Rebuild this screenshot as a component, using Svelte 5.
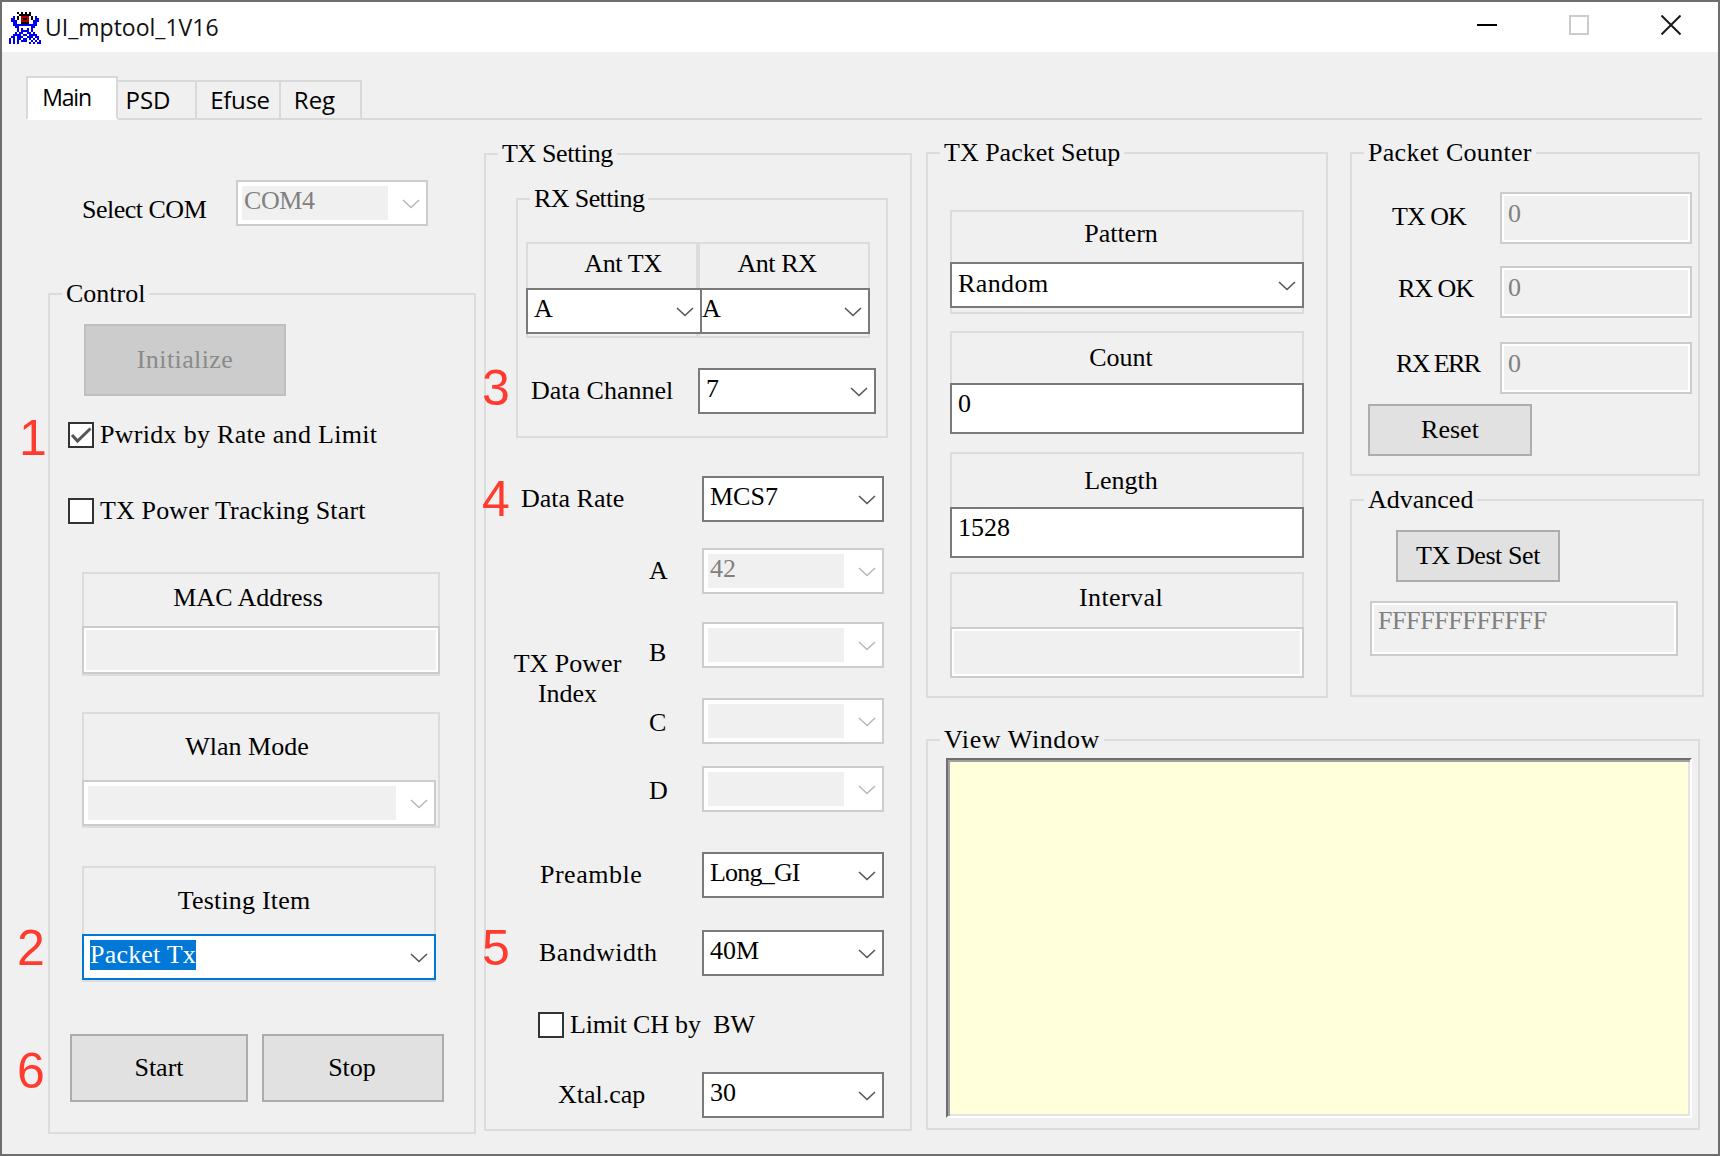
<script>
  const iconRows = [
    "....k.k.k.k.....",
    ".....kkkkkk.....",
    "..b.kwrrrrwk.b..",
    ".bb.kwrkkrwk.bb.",
    ".bbb.wrrrrw.bbb.",
    "..bb..kkkk..bb..",
    "..bbbbbbbbbbbb..",
    "...bbwwwwwwbb...",
    "....bwbwwbwb....",
    "....bwbbbbwb....",
    "...b.bbwwbb.b...",
    "..bbbbwbbwbbbb..",
    ".bbwbbbwwbbbwbb.",
    "bwbwbb.bb.bwbwb.",
    "bwbwb.bbb..bwbwb",
    "b.b.b.....b.b.bb"
  ];
  const iconColors = { b: "#0000f0", k: "#000000", r: "#b00000", w: "#ffffff" };

  const marks = [
    { n: 1, x: 19, y: 413 },
    { n: 2, x: 17, y: 923 },
    { n: 6, x: 17, y: 1046 },
    { n: 3, x: 482, y: 363 },
    { n: 4, x: 482, y: 474 },
    { n: 5, x: 482, y: 923 }
  ];

  const powerRows = [
    { id: "a", value: "42" },
    { id: "b", value: "" },
    { id: "c", value: "" },
    { id: "d", value: "" }
  ];

  const counters = [
    { id: "c-tx", label: "TX OK" },
    { id: "c-rx", label: "RX OK" },
    { id: "c-err", label: "RX ERR" }
  ];
</script>

{#snippet combo(value, cls = "")}
  <div class="combo {cls}">
    <span class="value">{value}</span>
    <svg class="chevron" width="18" height="10" viewBox="0 0 18 10">
      <path d="M1 1 L9 8.5 L17 1" fill="none" stroke-width="1.6" />
    </svg>
  </div>
{/snippet}

{#snippet checkbox(text, checked = false, cls = "")}
  <div class="check {cls}">
    <span class="box">
      {#if checked}
        <svg width="22" height="22" viewBox="0 0 22 22">
          <path d="M2 11 L7.5 17 L20.5 4.5" fill="none" stroke="#555" stroke-width="3" />
        </svg>
      {/if}
    </span>
    <span>{text}</span>
  </div>
{/snippet}

<div class="window">
  <header class="titlebar">
    <svg class="app-icon" width="32" height="32" viewBox="0 0 16 16" shape-rendering="crispEdges">
      {#each iconRows as row, y}
        {#each row.split("") as px, x}
          {#if iconColors[px]}
            <rect {x} {y} width="1" height="1" fill={iconColors[px]} />
          {/if}
        {/each}
      {/each}
    </svg>
    <span class="title">UI_mptool_1V16</span>
    <div class="caption">
      <span class="cap-btn"><i class="min"></i></span>
      <span class="cap-btn"><i class="max"></i></span>
      <span class="cap-btn">
        <svg width="20" height="20" viewBox="0 0 20 20">
          <path d="M0.5 0.5 L19.5 19.5 M19.5 0.5 L0.5 19.5" stroke="#1a1a1a" stroke-width="2" fill="none" />
        </svg>
      </span>
    </div>
  </header>

  <nav class="tabs">
    <span class="tab active">Main</span>
    <span class="tab psd">PSD</span>
    <span class="tab efuse">Efuse</span>
    <span class="tab reg">Reg</span>
  </nav>

  <main class="page">
    <section class="col-left">
      <div class="com-row">
        <span class="com-label">Select COM</span>
        {@render combo("COM4", "off com")}
      </div>

      <fieldset class="control">
        <legend>Control</legend>
        <button class="btn disabled init" type="button">Initialize</button>
        {@render checkbox("Pwridx by Rate and Limit", true, "pwr")}
        {@render checkbox("TX Power Tracking Start", false, "track")}

        <div class="group mac">
          <div class="group-title t-mac">MAC Address</div>
          <div class="edit off mac-edit"></div>
        </div>

        <div class="group wlan">
          <div class="group-title t-wlan">Wlan Mode</div>
          {@render combo("", "off wide")}
        </div>

        <div class="group testing">
          <div class="group-title t-test">Testing Item</div>
          <div class="combo focus wide">
            <span class="value"><span class="selected">Packet Tx</span></span>
            <svg class="chevron" width="18" height="10" viewBox="0 0 18 10">
              <path d="M1 1 L9 8.5 L17 1" fill="none" stroke-width="1.6" />
            </svg>
          </div>
        </div>

        <div class="run-row">
          <button class="btn start" type="button">Start</button>
          <button class="btn stop" type="button">Stop</button>
        </div>
      </fieldset>
    </section>

    <fieldset class="tx">
      <legend>TX Setting</legend>

      <fieldset class="rx">
        <legend>RX Setting</legend>
        <div class="ant">
          <div class="ant-cell first">
            <div class="ant-title">Ant TX</div>
            {@render combo("A", "ant-tx")}
          </div>
          <div class="ant-cell second">
            <div class="ant-title">Ant RX</div>
            {@render combo("A", "ant-rx")}
          </div>
        </div>
        <div class="channel">
          <span>Data Channel</span>
          {@render combo("7", "ch")}
        </div>
      </fieldset>

      <div class="row rate"><span>Data Rate</span>{@render combo("MCS7", "std")}</div>

      <div class="power">
        <div class="power-label">TX Power<br />Index</div>
        <div class="power-rows">
          {#each powerRows as r}
            <div class="power-row {r.id}">
              <span class="letter">{r.id.toUpperCase()}</span>
              {@render combo(r.value, "off std")}
            </div>
          {/each}
        </div>
      </div>

      <div class="row preamble"><span>Preamble</span>{@render combo("Long_GI", "std")}</div>
      <div class="row bandwidth"><span>Bandwidth</span>{@render combo("40M", "std")}</div>
      {@render checkbox("Limit CH by\u00a0 BW", false, "limit")}
      <div class="row xtal"><span>Xtal.cap</span>{@render combo("30", "std")}</div>
    </fieldset>

    <section class="col-right">
      <div class="top-row">
        <fieldset class="setup">
          <legend>TX Packet Setup</legend>
          <div class="group pattern">
            <div class="group-title t-pattern">Pattern</div>
            {@render combo("Random", "wide")}
          </div>
          <div class="group count">
            <div class="group-title">Count</div>
            <div class="edit">0</div>
          </div>
          <div class="group length">
            <div class="group-title">Length</div>
            <div class="edit">1528</div>
          </div>
          <div class="group interval">
            <div class="group-title">Interval</div>
            <div class="edit off"></div>
          </div>
        </fieldset>

        <div class="stack">
          <fieldset class="counter">
            <legend>Packet Counter</legend>
            {#each counters as c}
              <div class="count-row {c.id}">
                <span class="count-label">{c.label}</span>
                <div class="edit off small">0</div>
              </div>
            {/each}
            <button class="btn reset" type="button">Reset</button>
          </fieldset>

          <fieldset class="advanced">
            <legend>Advanced</legend>
            <button class="btn dest" type="button">TX Dest Set</button>
            <div class="edit off dest-edit">FFFFFFFFFFFF</div>
          </fieldset>
        </div>
      </div>

      <fieldset class="view">
        <legend>View Window</legend>
        <div class="log"></div>
      </fieldset>
    </section>
  </main>

  {#each marks as m}
    <span class="mark" style="left:{m.x - 2}px;top:{m.y - 2}px">{m.n}</span>
  {/each}
</div>

<style>
  :global(body) {
    margin: 0;
    background: #f0f0f0;
  }

  .window {
    position: relative;
    box-sizing: border-box;
    width: 1720px;
    height: 1156px;
    border: 2px solid #6e6e6e;
    background: #f0f0f0;
    color: #000;
    font-family: "Liberation Serif", serif;
    font-size: 26px;
    overflow: hidden;
  }

  .titlebar {
    display: flex;
    align-items: center;
    height: 50px;
    background: #fff;
    font-family: "Open Sans", sans-serif;
  }

  .app-icon {
    margin-left: 7px;
    margin-top: 2px;
  }

  .title {
    margin-left: 4px;
    font-size: 23px;
    color: #111;
  }

  .caption {
    display: flex;
    margin-left: auto;
    margin-right: 1px;
    padding-bottom: 4px;
  }

  .cap-btn {
    display: flex;
    align-items: center;
    justify-content: center;
    width: 92px;
    height: 20px;
  }

  .min {
    display: block;
    width: 20px;
    height: 2px;
    background: #000;
  }

  .max {
    display: block;
    box-sizing: border-box;
    width: 20px;
    height: 20px;
    border: 2px solid #ccc;
  }

  .tabs {
    display: flex;
    align-items: flex-end;
    height: 42px;
    margin: 24px 16px 0 24px;
    border-bottom: 2px solid #d9d9d9;
    font-family: "Open Sans", sans-serif;
    font-size: 24px;
  }

  .tab {
    box-sizing: border-box;
    height: 40px;
    margin-bottom: -2px;
    border: 2px solid #d9d9d9;
    border-left-width: 0;
    line-height: 36px;
    text-align: center;
  }

  .tab.active {
    width: 92px;
    height: 44px;
    border-left-width: 2px;
    border-bottom-color: #fff;
    background: #fff;
    line-height: 38px;
    padding-right: 11px;
    font-size: 23px;
    letter-spacing: -1.2px;
  }

  .tab.psd {
    width: 79px;
    padding-right: 17px;
  }

  .tab.efuse {
    width: 84px;
    padding-left: 4px;
    letter-spacing: -0.3px;
  }

  .tab.reg {
    width: 81px;
    padding-right: 12px;
  }

  .page {
    display: flex;
    align-items: flex-start;
    padding-left: 46px;
  }

  fieldset {
    box-sizing: border-box;
    min-width: 0;
    margin: 0;
    padding: 0;
    border: 2px solid #dcdcdc;
  }

  legend {
    margin-left: 12px;
    padding: 0 4px;
    line-height: 30px;
    white-space: nowrap;
  }

  .tx > legend {
    letter-spacing: -0.4px;
  }

  .rx > legend {
    letter-spacing: -0.6px;
  }

  .view > legend {
    letter-spacing: 0.6px;
  }

  .counter > legend {
    letter-spacing: 0.3px;
  }

  .btn {
    display: block;
    box-sizing: border-box;
    padding: 0;
    border: 2px solid #adadad;
    border-radius: 0;
    background: #e1e1e1;
    color: #000;
    font: inherit;
  }

  .btn.disabled {
    border-color: #bfbfbf;
    background: #ccc;
    color: #8a8a8a;
    letter-spacing: 0.4px;
  }

  .combo {
    display: flex;
    align-items: center;
    box-sizing: border-box;
    height: 46px;
    border: 2px solid #7a7a7a;
    background: #fff;
    flex: none;
    position: relative;
  }

  .value {
    flex: 1;
    align-self: stretch;
    display: block;
    min-width: 0;
    padding: 0 0 0 6px;
    line-height: 38px;
    white-space: nowrap;
  }

  .chevron {
    flex: none;
    margin: 2px 6px 0 14px;
    stroke: #555;
  }

  .combo.off {
    border-color: #ccc;
  }

  .combo.off .value {
    margin: 4px 0 4px 4px;
    padding-left: 2px;
    background: #f0f0f0;
    color: #808080;
    line-height: 30px;
  }

  .combo.off .chevron {
    stroke: #b9b9b9;
  }

  .combo.focus {
    border-color: #0078d7;
  }

  .selected {
    display: inline-block;
    margin-top: 4px;
    height: 30px;
    line-height: 30px;
    background: #0078d7;
    color: #fff;
    letter-spacing: 0.2px;
  }

  .combo.wide {
    width: auto;
    margin: 0 -2px;
  }

  .combo.com {
    width: 192px;
    margin-left: 0;
  }

  .combo.com .value {
    letter-spacing: -0.4px;
  }

  .combo.std {
    width: 182px;
  }

  .combo.ch {
    width: 178px;
  }

  .combo.ant-tx {
    width: 176px;
    margin-left: -2px;
  }

  .combo.ant-rx {
    width: 170px;
  }

  .combo.ant-rx .value {
    padding-left: 0;
  }

  .edit {
    box-sizing: border-box;
    height: 51px;
    margin: 0 -2px -2px;
    padding: 0 0 0 6px;
    border: 2px solid #7a7a7a;
    background: #fff;
    line-height: 38px;
  }

  .edit.off {
    border-color: #ccc;
    background: #f0f0f0;
    box-shadow: inset 0 0 0 2px #fff;
    color: #808080;
    line-height: 32px;
    padding-top: 2px;
  }

  .com-row {
    display: flex;
    margin: 60px 0 53px 34px;
  }

  .com-label {
    width: 154px;
    padding-top: 15px;
    line-height: 30px;
    letter-spacing: -0.5px;
  }

  .col-left {
    width: 428px;
    flex: none;
  }

  .control {
    height: 855px;
  }

  .init {
    width: 202px;
    height: 72px;
    margin: 15px 0 0 34px;
  }

  .check {
    display: flex;
    align-items: center;
    gap: 6px;
    height: 26px;
    line-height: 26px;
    white-space: nowrap;
  }

  .box {
    display: block;
    box-sizing: border-box;
    width: 26px;
    height: 26px;
    border: 2px solid #333;
    background: #fff;
    flex: none;
  }

  .box svg {
    display: block;
  }

  .check.pwr {
    margin: 26px 0 0 18px;
    letter-spacing: 0.3px;
  }

  .check.track {
    margin: 50px 0 0 18px;
    letter-spacing: 0.15px;
  }

  .group {
    box-sizing: border-box;
    border: 2px solid #dcdcdc;
  }

  .group-title {
    display: flex;
    align-items: center;
    justify-content: center;
    line-height: 30px;
    white-space: nowrap;
  }

  .mac {
    width: 358px;
    height: 104px;
    margin: 48px 0 0 32px;
  }

  .t-mac {
    box-sizing: border-box;
    height: 52px;
    padding-right: 26px;
    padding-bottom: 4px;
  }

  .mac-edit {
    height: 48px;
    margin: 0 -2px;
  }

  .wlan {
    width: 358px;
    height: 116px;
    margin: 36px 0 0 32px;
  }

  .wlan .combo {
    margin-right: 2px;
  }

  .t-wlan {
    height: 66px;
    padding-right: 28px;
  }

  .testing {
    width: 354px;
    height: 116px;
    margin: 38px 0 0 32px;
  }

  .t-test {
    height: 66px;
    padding-right: 30px;
    letter-spacing: 0.2px;
  }

  .run-row {
    display: flex;
    gap: 14px;
    margin: 52px 0 0 20px;
  }

  .start {
    width: 178px;
    height: 68px;
  }

  .stop {
    width: 182px;
    height: 68px;
    padding-right: 2px;
  }

  .tx {
    flex: none;
    width: 428px;
    height: 992px;
    margin: 19px 0 0 8px;
  }

  .rx {
    width: 372px;
    height: 254px;
    margin: 15px 0 0 30px;
  }

  .ant {
    display: flex;
    width: 344px;
    height: 96px;
    margin: 28px 0 0 8px;
  }

  .ant-cell {
    box-sizing: border-box;
    width: 172px;
    border: 2px solid #dcdcdc;
  }

  .ant-title {
    height: 44px;
    line-height: 40px;
    text-align: center;
    letter-spacing: -0.4px;
  }

  .first .ant-title {
    padding-left: 22px;
  }

  .second .ant-title {
    padding-right: 14px;
  }

  .channel {
    display: flex;
    align-items: center;
    justify-content: space-between;
    width: 345px;
    margin: 30px 0 0 13px;
    white-space: nowrap;
  }

  .row {
    display: flex;
    align-items: center;
    white-space: nowrap;
  }

  .row > span:first-child {
    flex: 1;
  }

  .rate {
    width: 363px;
    margin: 38px 0 0 35px;
  }

  .power {
    display: flex;
    margin-top: 26px;
  }

  .power-label {
    width: 163px;
    padding-top: 101px;
    line-height: 30px;
    text-align: center;
    flex: none;
  }

  .power-row {
    display: flex;
    align-items: center;
    height: 46px;
  }

  .letter {
    box-sizing: border-box;
    width: 53px;
    line-height: 30px;
  }

  .power-row.b {
    margin-top: 28px;
  }

  .power-row.c {
    margin-top: 30px;
  }

  .power-row.d {
    margin-top: 22px;
  }

  .power-row.b .letter {
    padding-top: 16px;
    height: 46px;
  }

  .power-row.c .letter,
  .power-row.d .letter {
    padding-top: 4px;
  }

  .preamble {
    width: 344px;
    margin: 40px 0 0 54px;
  }

  .preamble > span:first-child {
    letter-spacing: 0.5px;
  }

  .preamble .value {
    letter-spacing: -0.8px;
  }

  .bandwidth {
    width: 345px;
    margin: 32px 0 0 53px;
  }

  .bandwidth > span:first-child {
    letter-spacing: 0.5px;
  }

  .check.limit {
    margin: 36px 0 0 52px;
    letter-spacing: -0.2px;
  }

  .xtal {
    width: 326px;
    margin: 34px 0 0 72px;
  }

  .col-right {
    flex: none;
    width: 778px;
    margin: 18px 0 0 14px;
  }

  .top-row {
    display: flex;
    gap: 22px;
    align-items: flex-start;
  }

  .setup {
    flex: none;
    width: 402px;
    height: 560px;
  }

  .setup .group {
    width: 354px;
    margin-left: 22px;
  }

  .pattern {
    height: 104px;
    margin-top: 42px;
  }

  .pattern .value {
    letter-spacing: 0.4px;
    line-height: 40px;
  }

  .t-pattern,
  .count .group-title,
  .length .group-title,
  .interval .group-title {
    padding-right: 12px;
  }

  .t-pattern {
    height: 50px;
    padding-bottom: 6px;
    box-sizing: border-box;
  }

  .count {
    height: 103px;
    margin-top: 17px;
  }

  .count .group-title {
    height: 50px;
  }

  .length {
    height: 106px;
    margin-top: 18px;
  }

  .length .group-title,
  .interval .group-title {
    height: 53px;
  }

  .interval {
    height: 106px;
    margin-top: 14px;
  }

  .interval .group-title {
    box-sizing: border-box;
    padding-bottom: 6px;
    letter-spacing: 0.4px;
  }

  .stack {
    flex: none;
    width: 354px;
  }

  .counter {
    width: 350px;
    height: 338px;
  }

  .count-row {
    display: flex;
    align-items: center;
    margin-top: 22px;
  }

  .count-row.c-tx,
  .count-row.c-err {
    margin-top: 24px;
  }

  .count-label {
    box-sizing: border-box;
    width: 148px;
    height: 52px;
    line-height: 46px;
    white-space: nowrap;
    letter-spacing: -1px;
  }

  .c-tx .count-label {
    padding-left: 40px;
    line-height: 50px;
  }

  .c-rx .count-label {
    padding-left: 46px;
  }

  .c-err .count-label {
    padding-left: 44px;
    letter-spacing: -1.6px;
    line-height: 43px;
  }

  .edit.small {
    width: 192px;
    height: 52px;
    margin: 0;
    line-height: 36px;
  }

  .reset {
    width: 164px;
    height: 52px;
    margin: 10px 0 0 16px;
  }

  .advanced {
    width: 354px;
    height: 212px;
    margin-top: 9px;
  }

  .dest {
    width: 164px;
    height: 52px;
    margin: 15px 0 0 44px;
    letter-spacing: -0.4px;
  }

  .dest-edit {
    width: 308px;
    height: 55px;
    margin: 19px 0 0 18px;
    letter-spacing: -0.4px;
  }

  .view {
    width: 774px;
    height: 405px;
    margin-top: 27px;
  }

  .log {
    box-sizing: border-box;
    width: 746px;
    height: 360px;
    margin: 3px 0 0 18px;
    border-style: solid;
    border-width: 2px;
    border-color: #6e6e6e #fff #fff #6e6e6e;
    background: #ffffdc;
    box-shadow: inset 2px 2px 0 #a0a0a0, inset -2px -2px 0 #e3e3e3;
  }

  .mark {
    position: absolute;
    font-family: "Liberation Sans", sans-serif;
    font-size: 50px;
    line-height: 50px;
    color: #ff3b30;
  }
</style>
